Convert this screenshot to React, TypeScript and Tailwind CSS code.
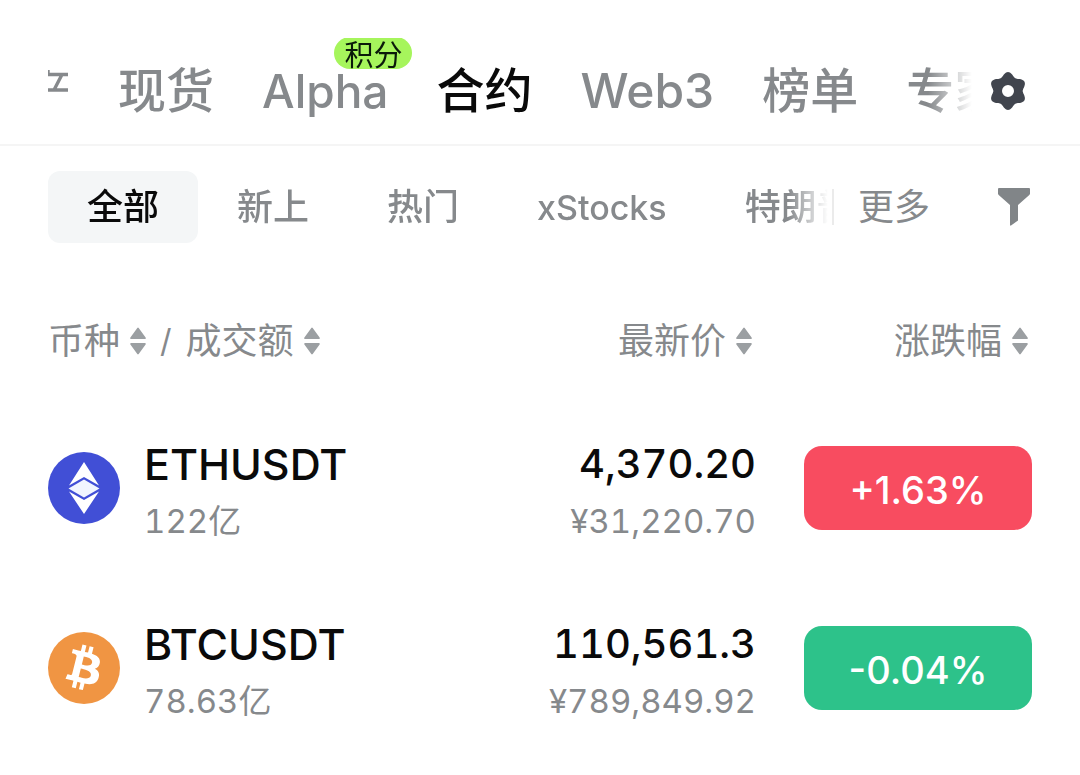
import type { ReactNode } from "react";

const gearOutline = Array.from({ length: 120 }, (_, i) => {
  const angle = (i * Math.PI) / 60;
  const radius = 16.8 + 2.1 * Math.cos(6 * angle);
  const x = 18 + radius * Math.sin(angle);
  const y = 19 - radius * Math.cos(angle);
  return `${i === 0 ? "M" : "L"}${x.toFixed(2)} ${y.toFixed(2)}`;
}).join("");

function GearIcon() {
  return (
    <svg viewBox="0 0 36 38" className="h-[38px] w-9" aria-hidden="true">
      <path
        fill="#41454e"
        fillRule="evenodd"
        d={`${gearOutline}ZM18 13a6 6 0 1 0 0 12a6 6 0 1 0 0-12z`}
      />
    </svg>
  );
}

function FunnelIcon() {
  return (
    <svg viewBox="0 0 32 38" className="h-[38px] w-8" aria-hidden="true">
      <path
        fill="#818588"
        d="M1 0h30a1 1 0 0 1 1 1v4.500a2 2 0 0 1-.7 1.500L20 17v15.500L13 37.500a.6.6 0 0 1-1-.5V17L.7 7A2 2 0 0 1 0 5.500V1a1 1 0 0 1 1-1z"
      />
    </svg>
  );
}

function SortIcon() {
  return (
    <svg viewBox="0 0 16 28" className="h-7 w-4" aria-hidden="true">
      <path
        fill="#9b9fa2"
        d="M7.300.9a1 1 0 0 1 1.400 0L15.600 10.500a.9.9 0 0 1-.7 1.500H1.100A.9.9 0 0 1 .4 10.500zM7.300 27.100a1 1 0 0 0 1.400 0L15.600 17.500a.9.9 0 0 0-.7-1.500H1.100A.9.9 0 0 0 .4 17.500z"
      />
    </svg>
  );
}

function EthLogo() {
  return (
    <svg viewBox="0 0 72 72" className="size-18 shrink-0" aria-hidden="true">
      <circle cx="36" cy="36" r="36" fill="#414fd6" />
      <path fill="#fff" d="M36 10L51 33.500L36 25L21 33.500z" />
      <path fill="#f1f5ff" d="M36 27.500L51.500 36.500L36 45.500L20.500 36.500z" />
      <path fill="#fff" d="M21 39.500L36 48L51 39.500L36 62z" />
    </svg>
  );
}

function BtcLogo() {
  return (
    <svg viewBox="0 0 64 64" className="size-18 shrink-0" aria-hidden="true">
      <circle cx="32" cy="32" r="32" fill="#f09543" />
      <path
        fill="#fff"
        d="M46.100 27.440c.64-4.260-2.600-6.550-7.040-8.080l1.440-5.770-3.510-.88-1.400 5.620c-.93-.23-1.880-.45-2.820-.66l1.410-5.660-3.510-.87-1.440 5.770c-.76-.17-1.520-.35-2.240-.53v-.02l-4.850-1.210-.93 3.750s2.600.6 2.550.63c1.420.36 1.680 1.300 1.640 2.040l-1.640 6.570c.1.030.22.060.36.120l-.37-.09-2.300 9.210c-.17.430-.62 1.080-1.610.83.030.05-2.550-.64-2.550-.64l-1.740 4.020 4.570 1.140c.85.210 1.680.43 2.500.64l-1.450 5.840 3.510.87 1.440-5.770c.96.260 1.890.5 2.800.73l-1.440 5.740 3.520.88 1.450-5.830c5.990 1.140 10.500.68 12.390-4.740 1.530-4.360-.07-6.880-3.230-8.520 2.300-.53 4.030-2.040 4.490-5.170zm-8.020 11.250c-1.090 4.370-8.430 2.010-10.820 1.410l1.930-7.740c2.380.6 10.010 1.770 8.890 6.330zm1.090-11.310c-.99 3.970-7.100 1.950-9.090 1.460l1.750-7.020c1.990.5 8.380 1.420 7.340 5.560z"
      />
    </svg>
  );
}

function ClippedTab() {
  return (
    <svg viewBox="0 0 22 26" className="mb-4 h-[26px] w-[22px]" aria-hidden="true">
      <path
        fill="none"
        stroke="#86898c"
        strokeWidth="3.400"
        d="M0 0V4.500H20M14 4.500L6 20M0 20H20"
      />
    </svg>
  );
}

const tabs = [
  { label: "现货", style: "text-5xl text-[#86898c]" },
  { label: "Alpha", style: "text-[46px] text-[#86898c]", tag: "积分" },
  { label: "合约", style: "text-5xl text-[#0a0a0a]" },
  { label: "Web3", style: "text-5xl text-[#86898c]" },
  { label: "榜单", style: "text-5xl text-[#86898c]" },
  { label: "专家", style: "text-5xl text-[#86898c]" },
];

const filters = [
  { label: "全部", style: "bg-[#f4f6f7] text-4xl text-[#0a0a0a]" },
  { label: "新上", style: "text-4xl text-[#86898c]" },
  { label: "热门", style: "text-4xl text-[#86898c]" },
  { label: "xStocks", style: "text-[34px] text-[#86898c]" },
  { label: "特朗普", style: "text-4xl text-[#86898c]" },
];

const rows = [
  {
    logo: <EthLogo />,
    symbol: "ETHUSDT",
    volume: "122亿",
    price: "4,370.20",
    fiat: "¥31,220.70",
    change: "+1.63%",
    color: "bg-[#f84c60]",
  },
  {
    logo: <BtcLogo />,
    symbol: "BTCUSDT",
    volume: "78.63亿",
    price: "110,561.3",
    fiat: "¥789,849.92",
    change: "-0.04%",
    color: "bg-[#2dc28a]",
  },
];

function SortButton({ children }: { children: ReactNode }) {
  return (
    <button type="button" className="inline-flex items-center gap-2.5 whitespace-nowrap">
      {children}
      <SortIcon />
    </button>
  );
}

export default function App() {
  return (
    <div className="min-h-screen bg-white font-['Inter','Noto_Sans_CJK_SC',sans-serif] text-[#0a0a0a]">
      <header className="flex h-[146px] items-center border-b-2 border-[#f5f5f5] px-12 pt-[38px]">
        <nav className="flex h-full min-w-0 flex-1 items-center gap-12 overflow-hidden [mask-image:linear-gradient(to_right,black_calc(100%-44px),transparent)]">
          <a href="#" aria-label="自选" className="shrink-0">
            <ClippedTab />
          </a>
          {tabs.map((tab) => (
            <a
              key={tab.label}
              href="#"
              className={`relative shrink-0 leading-[72px] font-medium ${tab.style}`}
            >
              {tab.label}
              {tab.tag && (
                <span className="absolute -top-[18px] -right-6 flex h-8 items-center rounded-full bg-[#a6f55c] px-2.5 pt-1 text-[29px] leading-none font-normal text-[#0a1a0a]">
                  {tab.tag}
                </span>
              )}
            </a>
          ))}
        </nav>
        <button type="button" aria-label="设置" className="ml-3 flex w-12 justify-center">
          <GearIcon />
        </button>
      </header>

      <div className="flex items-center px-12 pt-[25px]">
        <div className="flex min-w-0 flex-1 overflow-hidden [mask-image:linear-gradient(to_right,black_calc(100%-44px),transparent_calc(100%-4px))]">
          {filters.map((filter) => (
            <button
              key={filter.label}
              type="button"
              className={`h-18 shrink-0 rounded-xl px-[39px] font-medium ${filter.style}`}
            >
              {filter.label}
            </button>
          ))}
        </div>
        <div className="h-9 w-0.5 bg-[#ebebeb]" />
        <button type="button" className="ml-6 text-4xl text-[#86898c]">
          更多
        </button>
        <button type="button" aria-label="筛选" className="ml-[68px] pr-0.5">
          <FunnelIcon />
        </button>
      </div>

      <table className="mt-10 w-full table-fixed">
        <thead>
          <tr className="h-[115px] text-4xl text-[#86898c]">
            <th className="pl-12 text-left font-normal">
              <span className="flex items-center gap-3.5">
                <SortButton>币种</SortButton>
                <span className="text-[32px]">/</span>
                <SortButton>成交额</SortButton>
              </span>
            </th>
            <th className="w-[340px] pr-1 text-right font-normal">
              <SortButton>最新价</SortButton>
            </th>
            <th className="w-[324px] pr-[52px] text-right font-normal">
              <SortButton>涨跌幅</SortButton>
            </th>
          </tr>
        </thead>
        <tbody>
          {rows.map((row) => (
            <tr key={row.symbol} className="h-[180px]">
              <td className="pl-12">
                <div className="flex items-center gap-6">
                  {row.logo}
                  <div className="pt-1.5 tabular-nums">
                    <div className="text-[43px] leading-[60px] font-medium">{row.symbol}</div>
                    <div className="text-[33px] leading-[54px] text-[#86898c]">{row.volume}</div>
                  </div>
                </div>
              </td>
              <td className="pt-1.5 text-right tabular-nums">
                <div className="text-[40px] leading-[60px] font-medium">{row.price}</div>
                <div className="text-[33px] leading-[54px] text-[#86898c]">{row.fiat}</div>
              </td>
              <td className="px-12">
                <div
                  className={`flex h-[84px] items-center justify-center rounded-[18px] pt-1 text-[38px] font-medium text-white ${row.color}`}
                >
                  {row.change}
                </div>
              </td>
            </tr>
          ))}
        </tbody>
      </table>
    </div>
  );
}
